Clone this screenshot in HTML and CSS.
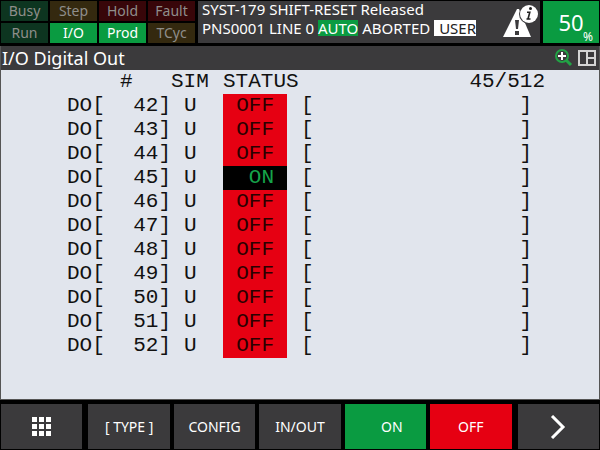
FILE: index.html
```html
<!DOCTYPE html>
<html lang="en">
<head>
<meta charset="utf-8">
<title>I/O Digital Out</title>
<link rel="stylesheet" href="styles.css">
</head>
<body>
<header class="status">
  <div class="lamps">
    <span class="lamp lamp-green">Busy</span>
    <span class="lamp lamp-amber">Step</span>
    <span class="lamp lamp-red">Hold</span>
    <span class="lamp lamp-red">Fault</span>
    <span class="lamp lamp-green">Run</span>
    <span class="lamp lamp-on">I/O</span>
    <span class="lamp lamp-on">Prod</span>
    <span class="lamp lamp-amber">TCyc</span>
  </div>
  <div class="message">
    <div class="lines">
      <p>SYST-179 SHIFT-RESET Released</p>
      <p>PNS0001 LINE 0 <span class="mode">AUTO</span> ABORTED <span class="user">USER</span></p>
    </div>
    <svg class="alert" viewBox="0 0 38 38" aria-label="Alert information">
      <path d="M15 6L1 34H29L17 6Z" fill="#fff"/>
      <path d="M13 17h4l-1 9h-2zM13 28h4v4h-4z" fill="#3b3a3c"/>
      <circle cx="27" cy="11" r="10" fill="#3b3a3c"/>
      <circle cx="27" cy="11" r="9" fill="#fff"/>
      <circle cx="28.500" cy="5.500" r="1.500" fill="#222"/>
      <path d="M25 9.200h2.800L26 16h2.500M24.500 16h2" fill="none" stroke="#222" stroke-width="1.600"/>
    </svg>
  </div>
  <div class="override"><span class="value">50</span><span class="unit">%</span></div>
</header>
<main class="panel">
  <div class="titlebar">
    <h1>I/O Digital Out</h1>
    <button class="tool" aria-label="Zoom">
      <svg width="20" height="18" viewBox="0 0 20 18"><circle cx="8" cy="7" r="6" fill="none" stroke="#21a345" stroke-width="2"/><path d="M12 11l5 5" stroke="#21a345" stroke-width="3"/><path d="M8 3v8M4 7h8" stroke="#fff" stroke-width="2"/></svg>
    </button>
    <button class="tool" aria-label="Split screen">
      <svg width="18" height="16" viewBox="0 0 18 16"><path d="M1 1h16v14H1zM9 1v14M9 8h8" fill="none" stroke="#d4d4d4" stroke-width="2"/></svg>
    </button>
  </div>
  <table class="io">
    <colgroup><col class="c-name"><col class="c-index"><col class="c-sim"><col class="c-status"><col></colgroup>
    <thead><tr><th></th><th>#</th><th>SIM</th><th>STATUS</th><th class="count">45/512</th></tr></thead>
    <tbody>
      <tr><td class="name">DO[</td><td class="index">42]</td><td class="sim">U</td><td class="off">OFF</td><td class="comment"><div><span>[</span><span>]</span></div></td></tr>
      <tr><td class="name">DO[</td><td class="index">43]</td><td class="sim">U</td><td class="off">OFF</td><td class="comment"><div><span>[</span><span>]</span></div></td></tr>
      <tr><td class="name">DO[</td><td class="index">44]</td><td class="sim">U</td><td class="off">OFF</td><td class="comment"><div><span>[</span><span>]</span></div></td></tr>
      <tr><td class="name">DO[</td><td class="index">45]</td><td class="sim">U</td><td class="on">ON</td><td class="comment"><div><span>[</span><span>]</span></div></td></tr>
      <tr><td class="name">DO[</td><td class="index">46]</td><td class="sim">U</td><td class="off">OFF</td><td class="comment"><div><span>[</span><span>]</span></div></td></tr>
      <tr><td class="name">DO[</td><td class="index">47]</td><td class="sim">U</td><td class="off">OFF</td><td class="comment"><div><span>[</span><span>]</span></div></td></tr>
      <tr><td class="name">DO[</td><td class="index">48]</td><td class="sim">U</td><td class="off">OFF</td><td class="comment"><div><span>[</span><span>]</span></div></td></tr>
      <tr><td class="name">DO[</td><td class="index">49]</td><td class="sim">U</td><td class="off">OFF</td><td class="comment"><div><span>[</span><span>]</span></div></td></tr>
      <tr><td class="name">DO[</td><td class="index">50]</td><td class="sim">U</td><td class="off">OFF</td><td class="comment"><div><span>[</span><span>]</span></div></td></tr>
      <tr><td class="name">DO[</td><td class="index">51]</td><td class="sim">U</td><td class="off">OFF</td><td class="comment"><div><span>[</span><span>]</span></div></td></tr>
      <tr><td class="name">DO[</td><td class="index">52]</td><td class="sim">U</td><td class="off">OFF</td><td class="comment"><div><span>[</span><span>]</span></div></td></tr>
    </tbody>
  </table>
</main>
<nav class="keys">
  <button class="key key-menu" aria-label="Menu">
    <svg width="20" height="20" viewBox="0 0 20 20" fill="#fff"><path d="M0 0h5v5H0zM7 0h5v5H7zM14 0h5v5h-5zM0 7h5v5H0zM7 7h5v5H7zM14 7h5v5h-5zM0 14h5v5H0zM7 14h5v5H7zM14 14h5v5h-5z"/></svg>
  </button>
  <button class="key">[ TYPE ]</button>
  <button class="key">CONFIG</button>
  <button class="key">IN/OUT</button>
  <button class="key key-on">ON</button>
  <button class="key key-off">OFF</button>
  <button class="key key-next" aria-label="Next">
    <svg width="16" height="24" viewBox="0 0 16 24"><path d="M2 1l11 11L2 23" fill="none" stroke="#fff" stroke-width="3"/></svg>
  </button>
</nav>
</body>
</html>
```
FILE: styles.css
```css
* { box-sizing: border-box; }

body {
  margin: 0;
  min-height: 100vh;
  display: flex;
  flex-direction: column;
  background: #000;
  color: #fff;
  font-family: "Noto Sans", sans-serif;
}

p, h1 { margin: 0; font-weight: 400; }
button { border: 0; padding: 0; color: inherit; font: inherit; }

.status { display: flex; gap: 3px; padding: 1px 1px 3px; height: 46px; }

.lamps {
  flex: 0 0 194px;
  display: grid;
  grid-template-columns: repeat(4, 1fr);
  grid-template-rows: repeat(2, 1fr);
  gap: 2px;
  font-size: 14px;
  line-height: 20px;
  text-align: center;
}
.lamp { color: #8f8e8b; }
.lamp-green { background: #0d3520; }
.lamp-amber { background: #34290f; }
.lamp-red { background: #380609; }
.lamp-on { background: #0a9b41; color: #fff; }

.message {
  flex: 1;
  display: flex;
  justify-content: space-between;
  padding-left: 4px;
  background: #3b3a3c;
  white-space: nowrap;
}
.lines {
  display: grid;
  gap: 3px;
  align-content: start;
  font-size: 15px;
  line-height: 16px;
}
.mode { display: inline-block; background: #0a9b41; }
.user { display: inline-block; padding-left: 5px; background: #fff; color: #222; }
.alert { width: 38px; height: 38px; margin-top: 2px; }

.override {
  flex: 0 0 56px;
  display: flex;
  align-items: center;
  justify-content: center;
  position: relative;
  background: #0a9b41;
}
.value { font-size: 22px; }
.unit { position: absolute; right: 6px; bottom: 0; font-size: 12px; line-height: 12px; }

.panel {
  flex: 1;
  display: flex;
  flex-direction: column;
  border: 1px solid #555;
  border-top: 0;
  background: #e1e5ed;
}
.titlebar {
  display: flex;
  align-items: center;
  gap: 4px;
  height: 24px;
  padding: 0 3px 0 1px;
  background: #3b3a3c;
}
.titlebar h1 { flex: 1; font-size: 18px; line-height: 24px; }
.tool { display: flex; background: none; }

.io {
  width: 100%;
  border-collapse: collapse;
  table-layout: fixed;
  color: #111;
  font-family: "Liberation Mono", monospace;
  font-size: 21px;
  line-height: 24px;
  white-space: pre;
}
.io th, .io td { height: 24px; padding: 0; font-weight: 400; text-align: left; }
.c-name { width: 119px; }
.c-index { width: 51px; }
.c-sim { width: 52px; }
.c-status { width: 64px; }
.io .name { padding-left: 66px; }
.io .index { text-align: right; }
.io .sim { padding-left: 13px; }
.io .off, .io .on { padding-right: 13px; text-align: right; }
.off { background: #e60012; color: #2b0000; }
.on { background: #000; color: #16a34a; }
.io .count { padding-right: 54px; text-align: right; }
.io .comment { padding: 0 67px 0 14px; }
.comment div { display: flex; justify-content: space-between; }

.keys { display: flex; gap: 4px; height: 50px; padding: 4px 1px 1px; }
.key {
  flex: 1;
  display: flex;
  align-items: center;
  justify-content: center;
  background: #3b3a3c;
  font-size: 14px;
}
.key-menu { margin-right: 2px; }
.key-next { margin-left: 2px; }
.key-on { text-indent: 13px; background: #0a9b41; }
.key-off { background: #e60012; }
```
